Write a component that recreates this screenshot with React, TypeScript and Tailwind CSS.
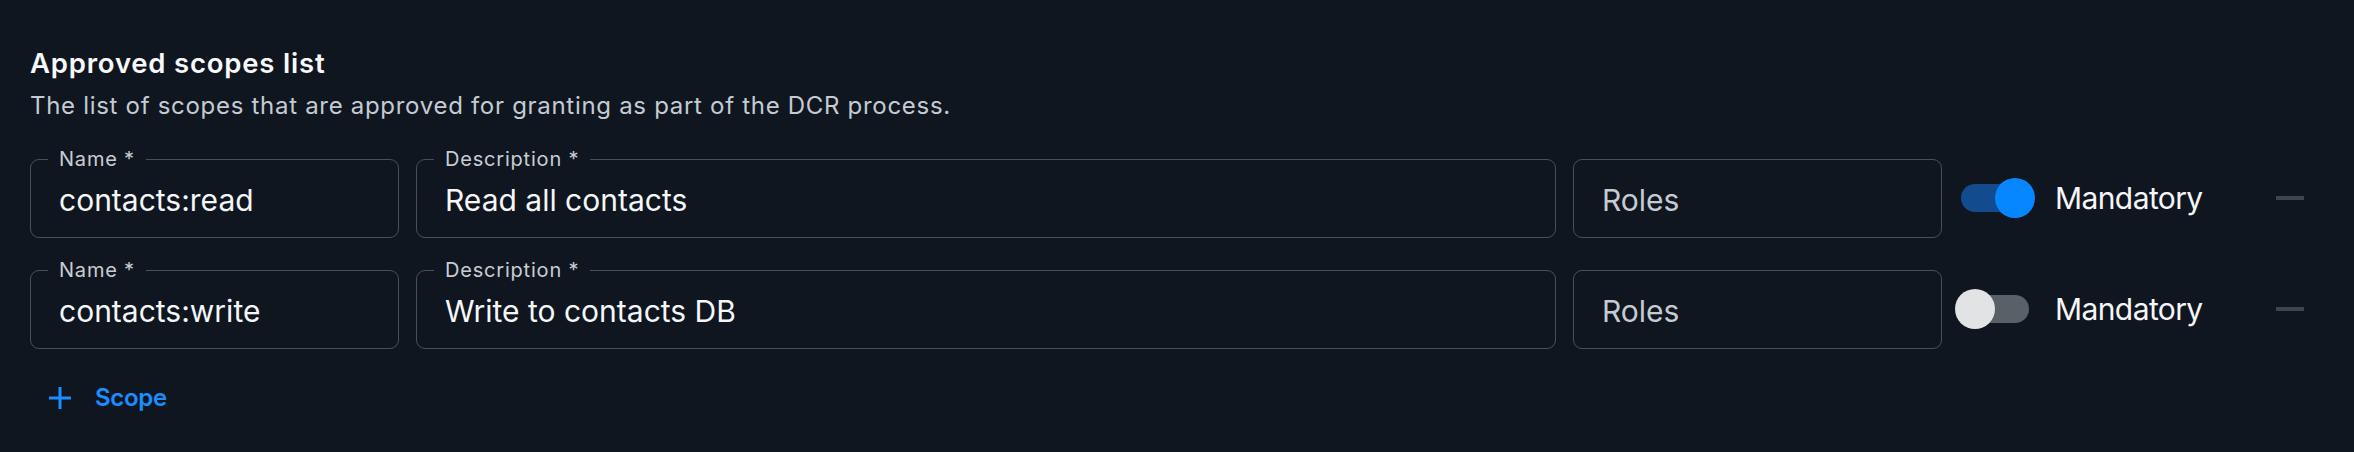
import React from 'react';

interface Scope {
  name: string;
  description: string;
  mandatory: boolean;
}

const scopes: Scope[] = [
  { name: 'contacts:read', description: 'Read all contacts', mandatory: true },
  { name: 'contacts:write', description: 'Write to contacts DB', mandatory: false },
];

function OutlinedField({
  label,
  value,
  placeholder,
  className,
}: {
  label?: string;
  value?: string;
  placeholder?: string;
  className?: string;
}) {
  return (
    <div
      className={`relative flex h-[79px] items-center rounded-[9px] border-[1.5px] border-[#4a5059] pl-[28px] pt-[4px] ${className ?? ''}`}
    >
      {label && (
        <span className="absolute left-[17px] top-[-11px] bg-[#0f1620] px-[11px] text-[20px] leading-none tracking-[0.8px] text-[#c9cdd3]">
          {label}
        </span>
      )}
      {value ? (
        <span className="text-[30px] leading-none text-[#f4f6f8]">{value}</span>
      ) : (
        <span className="text-[30px] leading-none text-[#c6cbd2]">{placeholder}</span>
      )}
    </div>
  );
}

function Toggle({ checked }: { checked: boolean }) {
  return (
    <div className="relative flex h-[40px] w-[80px] items-center">
      <div
        className={`ml-[6px] h-[28px] w-[68px] rounded-full ${checked ? 'bg-[#124b8e]' : 'bg-[#5a6068]'}`}
      />
      <div
        className={`absolute top-0 h-[40px] w-[40px] rounded-full ${checked ? 'left-[40px] bg-[#0787ff]' : 'left-0 bg-[#e1e3e4]'}`}
      />
    </div>
  );
}

function ScopeRow({ scope }: { scope: Scope }) {
  return (
    <div className="flex items-center">
      <OutlinedField label="Name *" value={scope.name} className="w-[369px]" />
      <OutlinedField label="Description *" value={scope.description} className="ml-[17px] w-[1140px]" />
      <OutlinedField placeholder="Roles" className="ml-[17px] w-[369px]" />
      <div className="ml-[13px] flex items-center gap-[20px]">
        <Toggle checked={scope.mandatory} />
        <span className="text-[30px] leading-none tracking-[-0.6px] text-[#f5f6f7]">Mandatory</span>
      </div>
      <button className="ml-auto mr-[50px] flex h-[28px] w-[28px] items-center" aria-label="Remove scope">
        <span className="h-[4px] w-[28px] bg-[#3f454e]" />
      </button>
    </div>
  );
}

export default function App() {
  return (
    <div
      className="h-[452px] w-full bg-[#0f1620] pl-[30px] pt-[50px]"
      style={{ fontFamily: 'Inter, "Noto Sans", sans-serif' }}
    >
      <h2 className="text-[27.5px] font-semibold leading-none tracking-[0.8px] text-[#f7f8fa]">
        Approved scopes list
      </h2>
      <p className="mt-[16px] text-[24px] leading-none tracking-[0.7px] text-[#c5cbd3]">
        The list of scopes that are approved for granting as part of the DCR process.
      </p>

      <div className="mt-[41px] flex flex-col gap-[32px]">
        {scopes.map((scope) => (
          <ScopeRow key={scope.name} scope={scope} />
        ))}
      </div>

      <button className="mt-[37px] flex items-center gap-[24px] pl-[19px]">
        <svg width="22" height="22" viewBox="0 0 22 22" fill="none">
          <path d="M11 0v22M0 11h22" stroke="#1a8dff" strokeWidth="3" />
        </svg>
        <span className="text-[24px] font-semibold leading-none tracking-[-0.3px] text-[#1a8dff]">Scope</span>
      </button>
    </div>
  );
}
